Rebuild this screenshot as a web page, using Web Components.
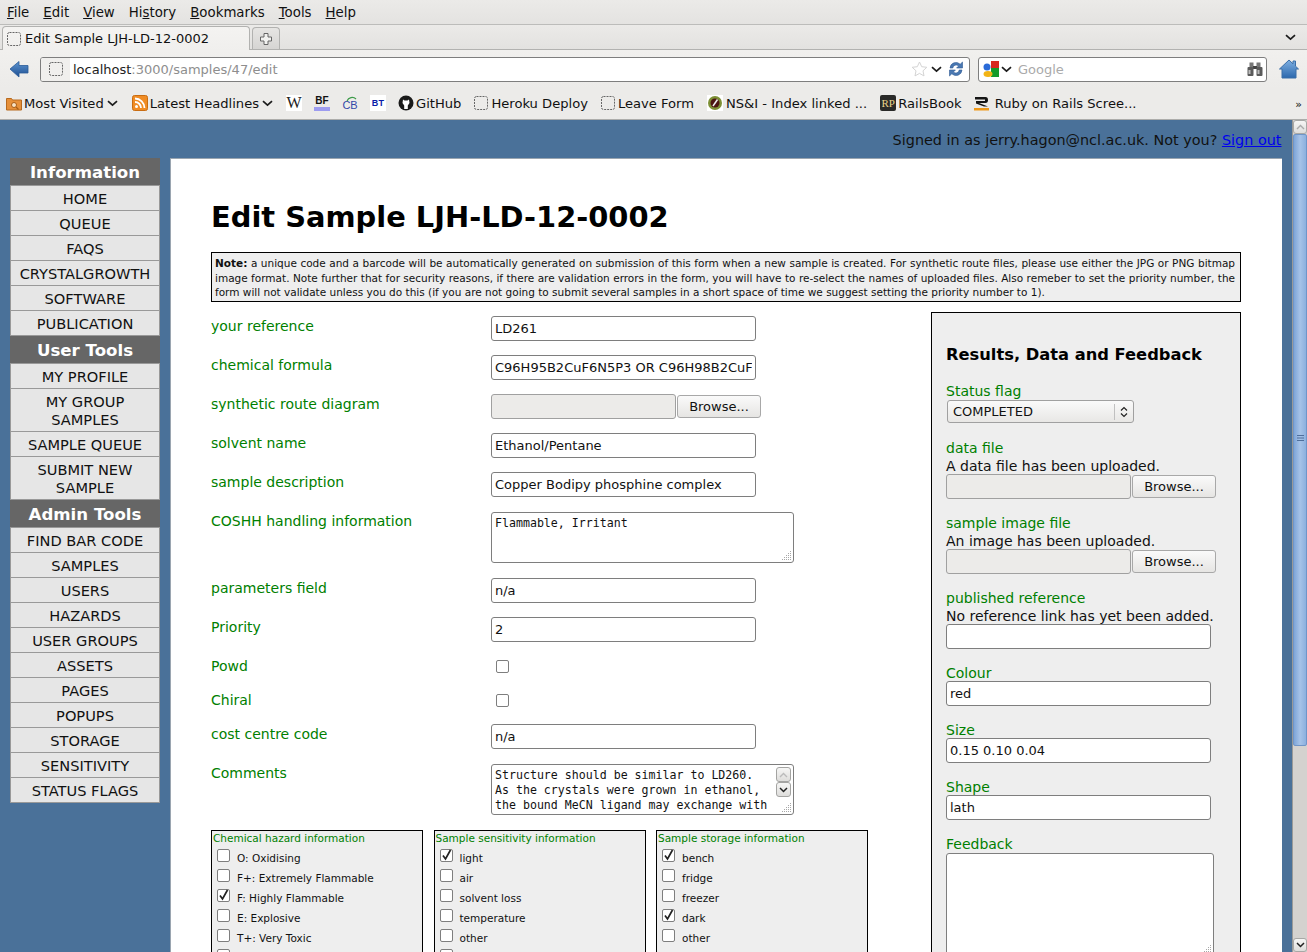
<!DOCTYPE html>
<html>
<head>
<meta charset="utf-8">
<title>Edit Sample LJH-LD-12-0002</title>
<style>
html, body { margin: 0; padding: 0; height: 952px; overflow: hidden; }
body { font-family: "DejaVu Sans", sans-serif; font-size: 14px; display: flex; flex-direction: column; }
</style>
</head>
<body>

<fx-menubar>
	<fx-menu><u>F</u>ile</fx-menu>
	<fx-menu><u>E</u>dit</fx-menu>
	<fx-menu><u>V</u>iew</fx-menu>
	<fx-menu>Hi<u>s</u>tory</fx-menu>
	<fx-menu><u>B</u>ookmarks</fx-menu>
	<fx-menu><u>T</u>ools</fx-menu>
	<fx-menu><u>H</u>elp</fx-menu>
</fx-menubar>
<fx-tabbar>Edit Sample LJH-LD-12-0002</fx-tabbar>
<fx-navbar></fx-navbar>
<fx-bookmarks></fx-bookmarks>

<page-view>
	<signed-in>Signed in as jerry.hagon@ncl.ac.uk. Not you? <a slot="link">Sign out</a></signed-in>
	<page-columns>
		<side-nav slot="nav">
			<nav-group title="Information">
				<nav-item>HOME</nav-item>
				<nav-item>QUEUE</nav-item>
				<nav-item>FAQS</nav-item>
				<nav-item>CRYSTALGROWTH</nav-item>
				<nav-item>SOFTWARE</nav-item>
				<nav-item>PUBLICATION</nav-item>
			</nav-group>
			<nav-group title="User Tools">
				<nav-item>MY PROFILE</nav-item>
				<nav-item>MY GROUP SAMPLES</nav-item>
				<nav-item>SAMPLE QUEUE</nav-item>
				<nav-item>SUBMIT NEW SAMPLE</nav-item>
			</nav-group>
			<nav-group title="Admin Tools">
				<nav-item>FIND BAR CODE</nav-item>
				<nav-item>SAMPLES</nav-item>
				<nav-item>USERS</nav-item>
				<nav-item>HAZARDS</nav-item>
				<nav-item>USER GROUPS</nav-item>
				<nav-item>ASSETS</nav-item>
				<nav-item>PAGES</nav-item>
				<nav-item>POPUPS</nav-item>
				<nav-item>STORAGE</nav-item>
				<nav-item>SENSITIVITY</nav-item>
				<nav-item>STATUS FLAGS</nav-item>
			</nav-group>
		</side-nav>
		<main-card>
			<page-title>Edit Sample LJH-LD-12-0002</page-title>
			<note-box><b>Note:</b> a unique code and a barcode will be automatically generated on submission of this form when a new sample is created. For synthetic route files, please use either the JPG or PNG bitmap image format. Note further that for security reasons, if there are validation errors in the form, you will have to re-select the names of uploaded files. Also remeber to set the priority number, the form will not validate unless you do this (if you are not going to submit several samples in a short space of time we suggest setting the priority number to 1).</note-box>
			<form-columns>
				<sample-form slot="form">
					<form-row label="your reference"><text-box>LD261</text-box></form-row>
					<form-row label="chemical formula"><text-box>C96H95B2CuF6N5P3 OR C96H98B2CuF6N4P3</text-box></form-row>
					<form-row label="synthetic route diagram"><file-box></file-box></form-row>
					<form-row label="solvent name"><text-box>Ethanol/Pentane</text-box></form-row>
					<form-row label="sample description"><text-box>Copper Bodipy phosphine complex</text-box></form-row>
					<form-row label="COSHH handling information" gap="tall"><area-box>Flammable, Irritant</area-box></form-row>
					<form-row label="parameters field"><text-box>n/a</text-box></form-row>
					<form-row label="Priority"><text-box>2</text-box></form-row>
					<form-row label="Powd" gap="check"><check-mark></check-mark></form-row>
					<form-row label="Chiral" gap="check"><check-mark></check-mark></form-row>
					<form-row label="cost centre code"><text-box>n/a</text-box></form-row>
					<form-row label="Comments" gap="tall"><area-box scroll>Structure should be similar to LD260.
As the crystals were grown in ethanol,
the bound MeCN ligand may exchange with</area-box></form-row>
					<check-groups>
						<check-group title="Chemical hazard information">
							<check-line>O: Oxidising</check-line>
							<check-line>F+: Extremely Flammable</check-line>
							<check-line checked>F: Highly Flammable</check-line>
							<check-line>E: Explosive</check-line>
							<check-line>T+: Very Toxic</check-line>
							<check-line></check-line>
						</check-group>
						<check-group title="Sample sensitivity information">
							<check-line checked>light</check-line>
							<check-line>air</check-line>
							<check-line>solvent loss</check-line>
							<check-line>temperature</check-line>
							<check-line>other</check-line>
							<check-line></check-line>
						</check-group>
						<check-group title="Sample storage information">
							<check-line checked>bench</check-line>
							<check-line>fridge</check-line>
							<check-line>freezer</check-line>
							<check-line checked>dark</check-line>
							<check-line>other</check-line>
						</check-group>
					</check-groups>
				</sample-form>
				<results-panel slot="panel">
					<panel-field label="Status flag"><select-box>COMPLETED</select-box></panel-field>
					<panel-field label="data file" hint="A data file has been uploaded."><file-box></file-box></panel-field>
					<panel-field label="sample image file" hint="An image has been uploaded."><file-box></file-box></panel-field>
					<panel-field label="published reference" hint="No reference link has yet been added."><text-box></text-box></panel-field>
					<panel-field label="Colour"><text-box>red</text-box></panel-field>
					<panel-field label="Size"><text-box>0.15 0.10 0.04</text-box></panel-field>
					<panel-field label="Shape"><text-box>lath</text-box></panel-field>
					<panel-field label="Feedback"><area-box class="feedback"></area-box></panel-field>
				</results-panel>
			</form-columns>
		</main-card>
	</page-columns>
	<page-scrollbar slot="scrollbar"></page-scrollbar>
</page-view>

<script>
// ------------------------------------
// Shared icons
// ------------------------------------

const dashedIcon = `<svg width="16" height="16" viewBox="0 0 16 16"><rect x="1.5" y="1.5" width="13" height="13" rx="2" fill="none" stroke="#666" stroke-dasharray="2 1"/></svg>`;
const chevron = `<svg width="11" height="7" viewBox="0 0 11 7"><path d="M1 1.2 5.5 5.2 10 1.2" fill="none" stroke="#1c1c1c" stroke-width="1.7"/></svg>`;

// ------------------------------------
// Browser chrome
// ------------------------------------

class fxMenubar extends HTMLElement {
	connectedCallback() {
		let shadowDom = this.attachShadow({ mode: "open" });

		shadowDom.innerHTML = `
    <style>
      :host{
        display:flex;
        flex:none;
        height:25px;
        box-sizing:border-box;
        border-bottom:1px solid #bcbcba;
        background:linear-gradient(#ebeae8,#e4e3e1);
        color:#111;
      }
     </style>
     <slot></slot>`;
	}
}
window.customElements.define("fx-menubar", fxMenubar);

class fxMenu extends HTMLElement {
	connectedCallback() {
		let shadowDom = this.attachShadow({ mode: "open" });

		shadowDom.innerHTML = `
    <style>
      :host{
        display:block;
        padding:1px 7px 0;
        font-size:13.33px;
        line-height:23px;
      }
     </style>
     <slot></slot>`;
	}
}
window.customElements.define("fx-menu", fxMenu);

class fxTabbar extends HTMLElement {
	connectedCallback() {
		let shadowDom = this.attachShadow({ mode: "open" });

		shadowDom.innerHTML = `
    <style>
      :host{
        display:flex;
        flex:none;
        height:25px;
        box-sizing:border-box;
        border-bottom:1px solid #b2b2b0;
        background:linear-gradient(#ebeae8,#e3e2e0);
        align-items:flex-end;
        padding-left:2px;
        position:relative;
      }
      .tab{
        width:248px;
        height:24px;
        margin-bottom:-1px;
        box-sizing:border-box;
        border:1px solid #b2b2b0;
        border-bottom:none;
        border-radius:4px 4px 0 0;
        background:linear-gradient(#f4f3f1,#f0efed);
        display:flex;
        align-items:center;
        gap:3px;
        padding-left:3px;
        font-size:13px;
        color:#111;
      }
      .new{
        width:28px;
        height:22px;
        box-sizing:border-box;
        margin-left:2px;
        border:1px solid #b2b2b0;
        border-bottom:none;
        border-radius:4px 4px 0 0;
        background:linear-gradient(#e6e5e3,#d6d5d3);
        display:flex;
        align-items:center;
        justify-content:center;
      }
      .more{ position:absolute; right:11px; top:9px; display:flex; }
     </style>
     <div class="tab">${dashedIcon}<span><slot></slot></span></div>
     <div class="new"><svg width="14" height="14" viewBox="0 0 14 14"><path d="M5 1.5h4v3.5h3.5v4H9v3.5H5V9H1.5V5H5z" fill="#f2f2f0" stroke="#666"/></svg></div>
     <div class="more">${chevron}</div>`;
	}
}
window.customElements.define("fx-tabbar", fxTabbar);

class fxNavbar extends HTMLElement {
	connectedCallback() {
		let shadowDom = this.attachShadow({ mode: "open" });

		shadowDom.innerHTML = `
    <style>
      :host{
        display:flex;
        flex:none;
        height:38px;
        box-sizing:border-box;
        background:linear-gradient(#f1f0ee,#ecebe9);
        align-items:center;
        padding:0 8px 0 9px;
        font-size:13px;
      }
      .back{ width:20px; height:20px; margin-right:11px; display:flex; }
      .bar{
        height:25px;
        box-sizing:border-box;
        border:1px solid #7e7e7e;
        border-radius:3px;
        background:#fff;
        display:flex;
        align-items:center;
      }
      .url{ width:930px; }
      .fav{
        width:29px;
        height:23px;
        background:#f0efed;
        display:flex;
        align-items:center;
        justify-content:center;
        border-radius:2px 0 0 2px;
        margin-right:3px;
      }
      .host{ color:#222; }
      .rest{ color:#8e8e8e; flex:1; }
      .tail{ display:flex; align-items:center; gap:3px; margin-right:5px; }
      .search{ width:289px; margin-left:8px; }
      .g{ display:flex; align-items:center; gap:2px; margin:0 6px 0 4px; }
      .q{ color:#aaa; flex:1; font-size:13px; }
      .bino{ margin-right:3px; display:flex; }
      .home{ margin-left:12px; display:flex; }
     </style>
     <div class="back"><svg width="20" height="20" viewBox="0 0 20 20"><defs><linearGradient id="b" x1="0" y1="0" x2="0" y2="1"><stop offset="0" stop-color="#5d94d0"/><stop offset="1" stop-color="#1d4f92"/></linearGradient></defs><path d="M1 10 10 2.5V6.5H19V14H10V18Z" fill="url(#b)" stroke="#2a5a98" stroke-width=".8"/></svg></div>
     <div class="bar url">
       <div class="fav">${dashedIcon}</div>
       <span class="host">localhost</span><span class="rest">:3000/samples/47/edit</span>
       <div class="tail">
         <svg width="17" height="16" viewBox="0 0 17 16"><path d="M8.5 1 10.7 5.7 15.8 6.3 12 9.8 13 14.9 8.5 12.4 4 14.9 5 9.8 1.2 6.3 6.3 5.7Z" fill="#fff" stroke="#d4d4d4"/></svg>
         ${chevron}
         <svg style="margin-left:3px" width="16" height="16" viewBox="0 0 16 16"><path d="M2 7A6 6 0 0 1 12.2 3.2L14.5 1V7H8.6L10.6 5A3.4 3.4 0 0 0 4.8 7Z" fill="#4a78b2" stroke="#2f5a94" stroke-width=".6"/><path d="M14 9A6 6 0 0 1 3.8 12.8L1.500 15V9H7.400L5.400 11A3.400 3.400 0 0 0 11.200 9Z" fill="#4a78b2" stroke="#2f5a94" stroke-width=".6"/></svg>
       </div>
     </div>
     <div class="bar search">
       <div class="g">
         <svg width="16" height="16" viewBox="0 0 16 16"><rect x="8" y="0" width="8" height="8" fill="#d8281f"/><rect x="8" y="7" width="8" height="9" fill="#159a2a"/><circle cx="4" cy="6" r="3.500" fill="#2a6bd8"/><ellipse cx="5" cy="13" rx="4.500" ry="3" fill="#f2b417"/></svg>
         ${chevron}
       </div>
       <span class="q">Google</span>
       <div class="bino"><svg width="16" height="16" viewBox="0 0 16 16"><rect x="2.500" y="1.500" width="4" height="5" fill="#777"/><rect x="9.500" y="1.500" width="4" height="5" fill="#777"/><rect x="6" y="5" width="4" height="3" fill="#444"/><rect x="0.500" y="6" width="6" height="9" rx="1" fill="#5a5a5a"/><rect x="9.500" y="6" width="6" height="9" rx="1" fill="#5a5a5a"/><rect x="1.500" y="9" width="2" height="4" fill="#bbb"/><rect x="10.500" y="9" width="2" height="4" fill="#bbb"/></svg></div>
     </div>
     <div class="home"><svg width="20" height="20" viewBox="0 0 20 20"><defs><linearGradient id="h" x1="0" y1="0" x2="0" y2="1"><stop offset="0" stop-color="#7fb0e2"/><stop offset="1" stop-color="#2c68ad"/></linearGradient></defs><path d="M10 1 14 4.800V2H16.500V7.200L19.500 10H17V19H3V10H.5Z" fill="url(#h)" stroke="#3a6ea8"/></svg></div>`;
	}
}
window.customElements.define("fx-navbar", fxNavbar);

class fxBookmarks extends HTMLElement {
	connectedCallback() {
		let shadowDom = this.attachShadow({ mode: "open" });

		shadowDom.innerHTML = `
    <style>
      :host{
        display:flex;
        flex:none;
        height:32px;
        box-sizing:border-box;
        border-bottom:1px solid #adadab;
        background:#ecebe9;
        align-items:center;
        padding:0 5px 1px 6px;
        gap:12px;
        font-size:13.1px;
        color:#111;
        position:relative;
      }
      .b{ display:flex; align-items:center; gap:2px; white-space:nowrap; height:16px; }
      .b > svg, .tile{ flex:none; }
      .tile{
        width:16px;
        height:16px;
        display:flex;
        align-items:center;
        justify-content:center;
        background:#fff;
        font-weight:bold;
        overflow:hidden;
        position:relative;
      }
      .w{ font-family:"Liberation Serif",serif; font-size:16px; font-weight:normal; color:#222; }
      .bf{ font-family:"Liberation Sans",sans-serif; font-size:10px; color:#111; height:16px; box-sizing:border-box; border-bottom:4px solid #9d9cf0; align-items:flex-start; background:#ecebe9; line-height:11px; }
      .cb{ font-family:"Liberation Sans",sans-serif; font-size:11px; font-weight:normal; color:#3348a8; background:transparent; align-items:flex-end; line-height:12px; }
      .cb svg{ position:absolute; left:0; top:0; }
      .bt{ font-family:"Liberation Sans",sans-serif; font-size:9px; font-weight:900; color:#0a1ca8; letter-spacing:.3px; }
      .rp{ background:#2a2a28; color:#e8d48c; font-family:"Liberation Serif",serif; font-size:11px; border-radius:2px; font-weight:normal; }
      .chev{ margin-left:1px; display:flex; }
      .over{ position:absolute; right:5px; top:11px; font-size:11px; line-height:11px; }
     </style>
     <div class="b">
       <svg width="16" height="16" viewBox="0 0 16 16"><path d="M.5 3.500h5l1 1.500h9v10H.5Z" fill="#e6903a" stroke="#b86a1e"/><circle cx="8" cy="10" r="2.500" fill="#f8e2c4" stroke="#a85c14"/><path d="M10 12l2.500 2.500" stroke="#a85c14" stroke-width="1.300"/></svg>
       <span>Most Visited</span><span class="chev">${chevron}</span>
     </div>
     <div class="b" style="margin-left:2px">
       <svg width="16" height="16" viewBox="0 0 16 16"><rect x=".5" y=".5" width="15" height="15" rx="2" fill="#f08c24" stroke="#c96d12"/><circle cx="4.500" cy="11.500" r="1.500" fill="#fff"/><path d="M3 7a6 6 0 0 1 6 6M3 3.500a9.500 9.500 0 0 1 9.500 9.500" fill="none" stroke="#fff" stroke-width="1.800"/></svg>
       <span>Latest Headlines</span><span class="chev">${chevron}</span>
     </div>
     <div class="tile w" style="margin-left:1px">W</div>
     <div class="tile bf">BF</div>
     <div class="tile cb"><svg width="16" height="16" viewBox="0 0 16 16"><path d="M5 6A5.500 5.500 0 0 1 14 4" fill="none" stroke="#3c9a48" stroke-width="1.200"/></svg>CB</div>
     <div class="tile bt">BT</div>
     <div class="b">
       <svg width="16" height="16" viewBox="0 0 16 16"><circle cx="8" cy="8" r="7.500" fill="#1a1a1a"/><path d="M5 4.500 6.500 5.500h3L11 4.500 11.500 8 9.800 10.500V14H6.200V10.500L4.500 8Z" fill="#fff"/></svg>
       <span>GitHub</span>
     </div>
     <div class="b">${dashedIcon}<span>Heroku Deploy</span></div>
     <div class="b">${dashedIcon}<span>Leave Form</span></div>
     <div class="b" style="margin-left:1px;gap:3px">
       <svg width="16" height="16" viewBox="0 0 16 16"><rect width="16" height="16" fill="#fff"/><circle cx="8" cy="8" r="7" fill="#7d8f35"/><circle cx="8" cy="8" r="4.500" fill="#4c1512"/><path d="M6 11 10.500 4.500" stroke="#eee" stroke-width="1.500"/></svg>
       <span>NS&amp;I - Index linked ...</span>
     </div>
     <div class="b" style="margin-left:1px"><div class="tile rp">RP</div><span>RailsBook</span></div>
     <div class="b" style="gap:6px">
       <svg width="15" height="16" viewBox="0 0 15 16"><path d="M1 2H11.500Q14 2 14 5T11.500 8H5L14 11.500H10L2 8.500V6H11V4.500H1Z" fill="#151515"/><rect x="0" y="13" width="15" height="2.500" fill="#f09a1a"/></svg>
       <span>Ruby on Rails Scree...</span>
     </div>
     <span class="over">»</span>`;
	}
}
window.customElements.define("fx-bookmarks", fxBookmarks);

// ------------------------------------
// Page frame
// ------------------------------------

class pageView extends HTMLElement {
	connectedCallback() {
		let shadowDom = this.attachShadow({ mode: "open" });

		shadowDom.innerHTML = `
    <style>
      :host{
        display:flex;
        flex:1;
        min-height:0;
        overflow:hidden;
        background:#4a7199;
      }
      .content{ flex:1; min-width:0; }
     </style>
     <div class="content"><slot></slot></div>
     <slot name="scrollbar"></slot>`;
	}
}
window.customElements.define("page-view", pageView);

class signedIn extends HTMLElement {
	connectedCallback() {
		let shadowDom = this.attachShadow({ mode: "open" });

		shadowDom.innerHTML = `
    <style>
      :host{
        display:block;
        height:38px;
        box-sizing:border-box;
        padding:11px 10.5px 0 0;
        text-align:right;
        font-size:14.4px;
        line-height:18px;
        color:#111;
      }
      ::slotted(a){ color:#0000ee; text-decoration:underline; }
     </style>
     <slot></slot><slot name="link"></slot>`;
	}
}
window.customElements.define("signed-in", signedIn);

class pageColumns extends HTMLElement {
	connectedCallback() {
		let shadowDom = this.attachShadow({ mode: "open" });

		shadowDom.innerHTML = `
    <style>
      :host{
        display:flex;
        gap:10px;
        padding:0 10px;
        align-items:flex-start;
      }
     </style>
     <slot name="nav"></slot><slot></slot>`;
	}
}
window.customElements.define("page-columns", pageColumns);

class pageScrollbar extends HTMLElement {
	connectedCallback() {
		let shadowDom = this.attachShadow({ mode: "open" });

		shadowDom.innerHTML = `
    <style>
      :host{
        display:flex;
        flex-direction:column;
        flex:none;
        width:15px;
        background:#d4d2cf;
        border-left:1px solid #9a9a98;
        box-sizing:border-box;
      }
      .btn{
        flex:none;
        height:14px;
        background:linear-gradient(#f6f6f5,#dedddb);
        border:1px solid #a8a8a6;
        border-radius:3px;
        box-sizing:border-box;
        display:flex;
        align-items:center;
        justify-content:center;
      }
      .thumb{
        flex:none;
        height:612px;
        box-sizing:border-box;
        background:linear-gradient(90deg,#7ea5d8,#a6c3e8 50%,#8cb0de);
        border:1px solid #6f95c8;
        border-radius:2px;
        display:flex;
        align-items:center;
        justify-content:center;
      }
      .thumb svg{ margin-bottom:4px; }
      .track{ flex:1; }
     </style>
     <div class="btn"><svg width="9" height="6" viewBox="0 0 9 6"><path d="M1 5 4.500 1.500 8 5" fill="none" stroke="#aaa" stroke-width="1.400"/></svg></div>
     <div class="thumb"><svg width="7" height="8" viewBox="0 0 7 8"><path d="M0 1.500H7M0 4H7M0 6.500H7" stroke="#4f6f9c"/></svg></div>
     <div class="track"></div>
     <div class="btn"><svg width="9" height="6" viewBox="0 0 9 6"><path d="M1 1 4.500 4.500 8 1" fill="none" stroke="#222" stroke-width="1.500"/></svg></div>`;
	}
}
window.customElements.define("page-scrollbar", pageScrollbar);

// ------------------------------------
// Left navigation
// ------------------------------------

class sideNav extends HTMLElement {
	connectedCallback() {
		let shadowDom = this.attachShadow({ mode: "open" });

		shadowDom.innerHTML = `
    <style>
      :host{ display:block; flex:none; width:150px; }
     </style>
     <slot></slot>`;
	}
}
window.customElements.define("side-nav", sideNav);

class navGroup extends HTMLElement {
	connectedCallback() {
		let shadowDom = this.attachShadow({ mode: "open" });

		shadowDom.innerHTML = `
    <style>
      :host{ display:block; }
      h2{
        margin:0;
        height:27px;
        border-bottom:1px solid #999;
        background:#666;
        color:#fff;
        font-size:16.6px;
        line-height:29px;
        font-weight:bold;
        text-align:center;
      }
     </style>
     <h2>${this.getAttribute("title")}</h2>
     <slot></slot>`;
	}
}
window.customElements.define("nav-group", navGroup);

class navItem extends HTMLElement {
	connectedCallback() {
		let shadowDom = this.attachShadow({ mode: "open" });

		shadowDom.innerHTML = `
    <style>
      :host{
        display:block;
        box-sizing:border-box;
        padding:4px 4px 2px;
        border:1px solid #999;
        border-top:none;
        background:#e6e6e6;
        color:#111;
        font-size:14.6px;
        line-height:18px;
        text-align:center;
      }
     </style>
     <slot></slot>`;
	}
}
window.customElements.define("nav-item", navItem);

// ------------------------------------
// Main card
// ------------------------------------

class mainCard extends HTMLElement {
	connectedCallback() {
		let shadowDom = this.attachShadow({ mode: "open" });

		shadowDom.innerHTML = `
    <style>
      :host{
        display:block;
        flex:none;
        width:1112px;
        height:900px;
        box-sizing:border-box;
        background:#fff;
        border-left:1px solid #9aa5b0;
        border-top:1px solid #9aa5b0;
        padding:0 41px 0 40px;
      }
     </style>
     <slot></slot>`;
	}
}
window.customElements.define("main-card", mainCard);

class pageTitle extends HTMLElement {
	connectedCallback() {
		let shadowDom = this.attachShadow({ mode: "open" });

		shadowDom.innerHTML = `
    <style>
      :host{
        display:block;
        padding-top:40px;
        font-size:28.9px;
        line-height:37px;
        font-weight:bold;
        color:#000;
        height:93px;
        box-sizing:border-box;
      }
     </style>
     <slot></slot>`;
	}
}
window.customElements.define("page-title", pageTitle);

class noteBox extends HTMLElement {
	connectedCallback() {
		let shadowDom = this.attachShadow({ mode: "open" });

		shadowDom.innerHTML = `
    <style>
      :host{
        display:block;
        box-sizing:border-box;
        height:50px;
        border:1px solid #000;
        background:#eee;
        padding:3px 5px 3px 3px;
        font-size:10.5px;
        line-height:14.5px;
        text-align:justify;
        color:#111;
      }
     </style>
     <slot></slot>`;
	}
}
window.customElements.define("note-box", noteBox);

class formColumns extends HTMLElement {
	connectedCallback() {
		let shadowDom = this.attachShadow({ mode: "open" });

		shadowDom.innerHTML = `
    <style>
      :host{
        display:flex;
        justify-content:space-between;
        align-items:flex-start;
      }
     </style>
     <slot name="form"></slot><slot name="panel"></slot>`;
	}
}
window.customElements.define("form-columns", formColumns);

class sampleForm extends HTMLElement {
	connectedCallback() {
		let shadowDom = this.attachShadow({ mode: "open" });

		shadowDom.innerHTML = `
    <style>
      :host{ display:block; padding-top:14px; width:660px; }
     </style>
     <slot></slot>`;
	}
}
window.customElements.define("sample-form", sampleForm);

class formRow extends HTMLElement {
	connectedCallback() {
		let shadowDom = this.attachShadow({ mode: "open" });

		let attr = {
			label: this.getAttribute("label"),
			gap: this.getAttribute("gap"),
		};
		let height = attr.gap === "check" ? "34px" : "auto";
		let margin = attr.gap === "check" ? "0" : attr.gap === "tall" ? "15px" : "14px";
		let fieldPad = attr.gap === "check" ? "padding:4px 0 0 5px;" : attr.gap === "tall" ? "padding-top:1px;" : "";

		shadowDom.innerHTML = `
    <style>
      :host{
        display:flex;
        height:${height};
        margin-bottom:${margin};
      }
      label{
        flex:none;
        width:280px;
        color:#008000;
        line-height:18px;
        padding-top:1px;
      }
      .field{ ${fieldPad} }
     </style>
     <label>${attr.label}</label>
     <div class="field"><slot></slot></div>`;
	}
}
window.customElements.define("form-row", formRow);

class textBox extends HTMLElement {
	connectedCallback() {
		let shadowDom = this.attachShadow({ mode: "open" });

		shadowDom.innerHTML = `
    <style>
      :host{
        display:block;
        width:265px;
        height:25px;
        box-sizing:border-box;
        border:1px solid #7e7e7e;
        border-radius:3px;
        background:#fff;
        font-size:13px;
        line-height:23px;
        color:#111;
      }
      .clip{ margin:0 3px; height:23px; white-space:nowrap; overflow:hidden; }
     </style>
     <div class="clip"><slot></slot></div>`;
	}
}
window.customElements.define("text-box", textBox);

class fileBox extends HTMLElement {
	connectedCallback() {
		let shadowDom = this.attachShadow({ mode: "open" });

		shadowDom.innerHTML = `
    <style>
      :host{ display:flex; align-items:center; gap:1px; }
      .name{
        width:185px;
        height:25px;
        box-sizing:border-box;
        border:1px solid #a0a0a0;
        border-radius:3px;
        background:#ecebe9;
      }
      .btn{
        width:84px;
        height:23px;
        box-sizing:border-box;
        border:1px solid #a8a8a8;
        border-radius:3px;
        background:linear-gradient(#fafafa,#e6e5e3);
        font-size:13px;
        line-height:21px;
        text-align:center;
        color:#111;
      }
     </style>
     <div class="name"></div><div class="btn">Browse...</div>`;
	}
}
window.customElements.define("file-box", fileBox);

class areaBox extends HTMLElement {
	connectedCallback() {
		let shadowDom = this.attachShadow({ mode: "open" });
		let scroll = this.hasAttribute("scroll");
		let feedback = this.classList.contains("feedback");

		shadowDom.innerHTML = `
    <style>
      :host{
        display:block;
        position:relative;
        width:${feedback ? "268px" : "303px"};
        height:${feedback ? "104px" : "51px"};
        margin-top:${feedback ? "1px" : "0"};
        box-sizing:border-box;
        border:1px solid #7e7e7e;
        border-radius:3px;
        background:#fff;
        overflow:hidden;
      }
      .text{
        margin:3px 3px 0;
        font-family:"DejaVu Sans Mono",monospace;
        font-size:11.6px;
        line-height:15px;
        color:#111;
        white-space:pre;
      }
      .grip{ position:absolute; right:1px; bottom:1px; }
      .sb{
        position:absolute;
        right:2px;
        top:2px;
        width:15px;
        height:30px;
        display:flex;
        flex-direction:column;
      }
      .sb div{
        height:15px;
        box-sizing:border-box;
        border:1px solid #a4a4a2;
        border-radius:3px;
        background:linear-gradient(#f6f6f5,#dedddb);
        display:flex;
        align-items:center;
        justify-content:center;
      }
     </style>
     <div class="text"><slot></slot></div>
     ${scroll ? `<div class="sb"><div><svg width="9" height="6" viewBox="0 0 9 6"><path d="M1 5 4.500 1.500 8 5" fill="none" stroke="#bbb" stroke-width="1.400"/></svg></div><div><svg width="9" height="6" viewBox="0 0 9 6"><path d="M1 1 4.500 4.500 8 1" fill="none" stroke="#222" stroke-width="1.500"/></svg></div></div>` : ""}
     <svg class="grip" width="11" height="11" viewBox="0 0 11 11" fill="#a8a8a8"><rect x="9" y="1" width="1" height="1"/><rect x="7" y="3" width="1" height="1"/><rect x="9" y="3" width="1" height="1"/><rect x="5" y="5" width="1" height="1"/><rect x="7" y="5" width="1" height="1"/><rect x="9" y="5" width="1" height="1"/><rect x="3" y="7" width="1" height="1"/><rect x="5" y="7" width="1" height="1"/><rect x="7" y="7" width="1" height="1"/><rect x="9" y="7" width="1" height="1"/><rect x="1" y="9" width="1" height="1"/><rect x="3" y="9" width="1" height="1"/><rect x="5" y="9" width="1" height="1"/><rect x="7" y="9" width="1" height="1"/><rect x="9" y="9" width="1" height="1"/></svg>`;
	}
}
window.customElements.define("area-box", areaBox);

class checkMark extends HTMLElement {
	connectedCallback() {
		let shadowDom = this.attachShadow({ mode: "open" });
		let checked = this.hasAttribute("checked");

		shadowDom.innerHTML = `
    <style>
      :host{
        display:block;
        flex:none;
        width:13px;
        height:13px;
        box-sizing:border-box;
        border:1px solid #7e7e7e;
        border-radius:2px;
        background:#fff;
      }
      svg{ display:block; }
     </style>
     ${checked ? `<svg width="11" height="11" viewBox="0 0 11 11" style="overflow:visible"><path d="M2 5.500 4.500 9 9.500 0" fill="none" stroke="#222" stroke-width="1.700"/></svg>` : ""}`;
	}
}
window.customElements.define("check-mark", checkMark);

class checkGroups extends HTMLElement {
	connectedCallback() {
		let shadowDom = this.attachShadow({ mode: "open" });

		shadowDom.innerHTML = `
    <style>
      :host{ display:flex; gap:10.5px; width:657px; align-items:stretch; }
     </style>
     <slot></slot>`;
	}
}
window.customElements.define("check-groups", checkGroups);

class checkGroup extends HTMLElement {
	connectedCallback() {
		let shadowDom = this.attachShadow({ mode: "open" });

		shadowDom.innerHTML = `
    <style>
      :host{
        display:block;
        flex:none;
        width:212px;
        height:150px;
        box-sizing:border-box;
        border:1px solid #000;
        background:#eee;
        font-size:10.5px;
      }
      .title{ color:#008000; line-height:15px; padding-left:1px; }
     </style>
     <div class="title">${this.getAttribute("title")}</div>
     <slot></slot>`;
	}
}
window.customElements.define("check-group", checkGroup);

class checkLine extends HTMLElement {
	connectedCallback() {
		let shadowDom = this.attachShadow({ mode: "open" });
		let checked = this.hasAttribute("checked");

		shadowDom.innerHTML = `
    <style>
      :host{
        display:flex;
        height:20px;
        align-items:flex-start;
        padding-left:5px;
        color:#111;
      }
      .box{ margin-top:3px; margin-right:7px; }
      .text{ line-height:20px; margin-top:2px; }
     </style>
     <check-mark class="box" ${checked ? "checked" : ""}></check-mark>
     <span class="text"><slot></slot></span>`;
	}
}
window.customElements.define("check-line", checkLine);

// ------------------------------------
// Results panel
// ------------------------------------

class resultsPanel extends HTMLElement {
	connectedCallback() {
		let shadowDom = this.attachShadow({ mode: "open" });

		shadowDom.innerHTML = `
    <style>
      :host{
        display:block;
        flex:none;
        width:310px;
        height:700px;
        margin-top:10px;
        box-sizing:border-box;
        border:1px solid #000;
        background:#eee;
        padding:32px 14px 0;
      }
      h3{
        margin:0 0 17px;
        font-size:16.3px;
        line-height:20px;
        font-weight:bold;
        color:#000;
      }
     </style>
     <h3>Results, Data and Feedback</h3>
     <slot></slot>`;
	}
}
window.customElements.define("results-panel", resultsPanel);

class panelField extends HTMLElement {
	connectedCallback() {
		let shadowDom = this.attachShadow({ mode: "open" });
		let hint = this.getAttribute("hint");

		shadowDom.innerHTML = `
    <style>
      :host{ display:block; margin-bottom:15px; line-height:18px; color:#111; }
      .label{ color:#008000; }
      .control{ margin-top:-1px; display:flow-root; }
     </style>
     <div class="label">${this.getAttribute("label")}</div>
     ${hint ? `<div>${hint}</div>` : ""}
     <div class="control"><slot></slot></div>`;
	}
}
window.customElements.define("panel-field", panelField);

class selectBox extends HTMLElement {
	connectedCallback() {
		let shadowDom = this.attachShadow({ mode: "open" });

		shadowDom.innerHTML = `
    <style>
      :host{
        display:flex;
        align-items:center;
        width:187px;
        height:23px;
        margin:1px 0 1px 1px;
        box-sizing:border-box;
        border:1px solid #a0a0a0;
        border-radius:3px;
        background:linear-gradient(#fafafa,#e8e7e5);
        font-size:13px;
        color:#111;
        padding-left:5px;
      }
      .text{ flex:1; }
      .arrows{
        flex:none;
        width:18px;
        height:16px;
        border-left:1px solid #c0c0c0;
        display:flex;
        align-items:center;
        justify-content:center;
      }
     </style>
     <span class="text"><slot></slot></span>
     <div class="arrows"><svg width="8" height="12" viewBox="0 0 8 12"><path d="M1 4.500 4 1.500 7 4.500M1 7.500 4 10.500 7 7.500" fill="none" stroke="#222" stroke-width="1.200"/></svg></div>`;
	}
}
window.customElements.define("select-box", selectBox);
</script>
</body>
</html>
